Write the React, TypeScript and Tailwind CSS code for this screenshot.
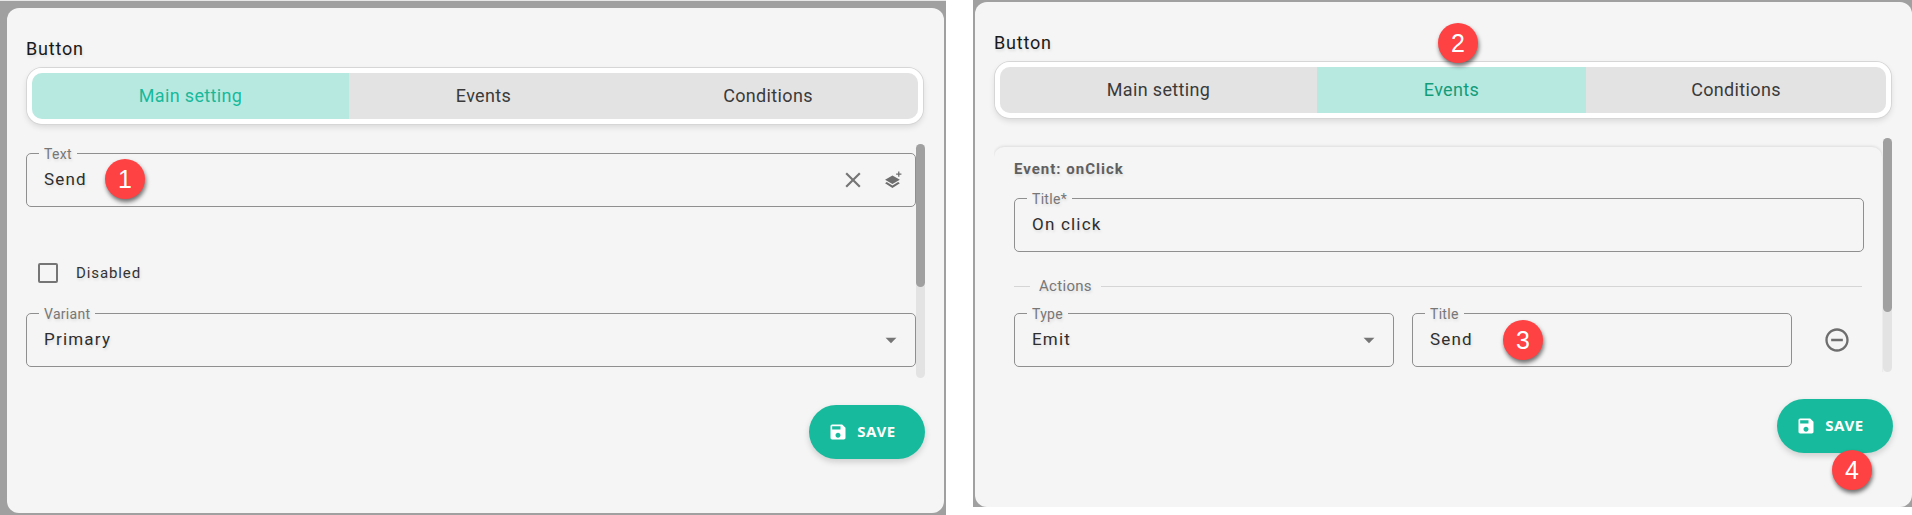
import React from "react";

const shadowText = "[text-shadow:1px_2px_3px_rgba(0,0,0,0.1)]";

function Badge({ n, className }: { n: number; className: string }) {
  return (
    <div
      className={`absolute z-10 flex h-10 w-10 items-center justify-center rounded-full bg-[#fe4143] font-['Liberation_Sans',sans-serif] text-[25px] leading-none text-white shadow-[1px_3px_4px_rgba(0,0,0,0.55)] ${className}`}
    >
      {n}
    </div>
  );
}

function Tabs({ active }: { active: number }) {
  const items = [
    { label: "Main setting", w: "w-[317px]", rounded: "rounded-l-[10px]" },
    { label: "Events", w: "w-[269px]", rounded: "" },
    { label: "Conditions", w: "flex-1", rounded: "rounded-r-[10px]" },
  ];
  return (
    <div className="flex h-[56px] w-[896px] rounded-[15px] border-[5px] border-white shadow-[0_0_0_1px_#d6d6d6,0_3px_6px_rgba(0,0,0,0.12)]">
      {items.map((t, i) => (
        <div
          key={t.label}
          className={`flex h-full items-center justify-center pb-[2px] text-[18px] font-normal tracking-[0.35px] ${t.w} ${t.rounded} ${
            i === active
              ? `bg-[#b7e9e1] ${active === 0 ? "text-[#18b99b]" : "text-[#149c78]"}`
              : "bg-[#e3e3e3] text-[#3a3a3a]"
          }`}
        >
          {t.label}
        </div>
      ))}
    </div>
  );
}

function Field({
  label,
  value,
  className,
  children,
}: {
  label: string;
  value: string;
  className: string;
  children?: React.ReactNode;
}) {
  return (
    <div className={`relative flex h-[54px] items-center rounded-[5px] border border-[#8f8f8f] pl-[17px] pr-[10px] ${className}`}>
      <span className={`absolute left-[12px] top-[-8px] bg-[#f5f5f5] px-[5px] text-[14px] leading-[16px] tracking-[0.3px] text-[#777777] ${shadowText}`}>
        {label}
      </span>
      <span className={`flex-1 text-[17px] tracking-[1.2px] text-[#2e2e2e] ${shadowText}`}>{value}</span>
      {children}
    </div>
  );
}

function Arrow() {
  return (
    <svg viewBox="0 0 24 24" className="mr-[1px] h-[26px] w-[26px] fill-[#757575]">
      <path d="M7 10l5 5 5-5z" />
    </svg>
  );
}

function SaveButton() {
  return (
    <div className="flex h-[54px] w-[116px] items-center justify-center gap-[9px] rounded-full bg-[#17ba9c] pb-[1px] pr-[10px] font-['Noto_Sans',sans-serif] text-[15px] font-bold tracking-[0.6px] text-white shadow-[0_3px_6px_rgba(0,0,0,0.16)]">
      <svg viewBox="0 0 24 24" className="h-[20px] w-[20px] fill-white">
        <path d="M17 3H5c-1.11 0-2 .9-2 2v14c0 1.1.89 2 2 2h14c1.1 0 2-.9 2-2V7l-4-4zm-5 16c-1.66 0-3-1.34-3-3s1.34-3 3-3 3 1.34 3 3-1.34 3-3 3zm3-10H5V5h10v4z" />
      </svg>
      SAVE
    </div>
  );
}

function Scrollbar({ thumb }: { thumb: string }) {
  return (
    <div className="h-full w-[9px] shrink-0 rounded-full bg-[#e3e3e3]">
      <div className={`w-full rounded-full bg-[#a0a0a0] ${thumb}`} />
    </div>
  );
}

function LeftPanel() {
  return (
    <div className="relative h-[515px] w-[946px] shrink-0 border-t border-t-[#e8e8e8] bg-[#a0a0a0] pl-[7px] pr-[2px] pt-[7px]">
      <div className="h-[505px] rounded-[12px] bg-[#f5f5f5] pl-[19px] pr-[19px]">
        <div className={`h-[53px] pt-[30px] text-[18px] font-normal leading-[22px] tracking-[0.8px] text-[#1a1a1a] ${shadowText}`}>Button</div>
        <div className="ml-[1px] mt-[7px]">
          <Tabs active={0} />
        </div>
        <div className="mt-[20px] flex h-[234px] overflow-hidden">
          <div className="w-[890px] pt-[9px]">
            <Field label="Text" value="Send" className="w-[890px]">
              <svg viewBox="0 0 24 24" className="mr-[18px] h-[26px] w-[26px] fill-[#757575]">
                <path d="M19 6.41 17.59 5 12 10.59 6.41 5 5 6.41 10.59 12 5 17.59 6.41 19 12 13.41 17.59 19 19 17.59 13.41 12z" />
              </svg>
              <svg viewBox="0 0 18 18" className="mr-[2px] h-[19px] w-[19px] fill-[#6e6e6e]">
                <path d="M8 4.2 1 8.4l7 4 7-4-1.6-1L8 4.2ZM2.6 10.5 1 11.6l7 4.6 7-4.6-1.6-1.1L8 13.7l-5.4-3.2Z" />
                <path d="M13.4 0.4h1.2v1.9h1.9v1.2h-1.9v1.9h-1.2V3.5h-1.9V2.3h1.9z" />
              </svg>
            </Field>
            <div className="ml-[12px] mt-[56px] flex h-[20px] items-center">
              <div className="h-[20px] w-[20px] rounded-[2px] border-2 border-[#757575]" />
              <span className={`ml-[18px] text-[15px] tracking-[0.9px] text-[#333333] ${shadowText}`}>Disabled</span>
            </div>
            <Field label="Variant" value="Primary" className="mt-[30px] w-[890px]">
              <Arrow />
            </Field>
          </div>
          <Scrollbar thumb="h-[143px]" />
        </div>
        <div className="mt-[27px] flex justify-end">
          <SaveButton />
        </div>
      </div>
      <Badge n={1} className="left-[105px] top-[158px]" />
    </div>
  );
}

function RightPanel() {
  return (
    <div className="relative h-[507px] flex-1 bg-[#a0a0a0] pl-[2px] pt-[2px]">
      <div className="h-[505px] rounded-[12px] bg-[#f5f5f5] pl-[19px] pr-[19px]">
        <div className={`h-[49px] pt-[30px] text-[18px] font-normal leading-[22px] tracking-[0.8px] text-[#1a1a1a] ${shadowText}`}>Button</div>
        <div className="ml-[1px] mt-[11px]">
          <Tabs active={1} />
        </div>
        <div className="mt-[20px] flex h-[234px] gap-[1px] overflow-hidden">
          <div className="mt-[9px] h-[240px] w-[888px] rounded-t-[10px] px-[20px] pt-[13px] shadow-[0_-1px_3px_rgba(0,0,0,0.1)]">
            <div className={`text-[15px] font-bold leading-[18px] tracking-[1px] text-[#5f5f5f] ${shadowText}`}>Event: onClick</div>
            <Field label="Title*" value="On click" className="mt-[20px] w-[850px]" />
            <div className="mt-[24px] flex items-center">
              <div className="h-px w-[16px] bg-[#d5d5d5]" />
              <span className={`mx-[9px] text-[15px] leading-[20px] tracking-[0.3px] text-[#777777] ${shadowText}`}>Actions</span>
              <div className="h-px flex-1 bg-[#d5d5d5]" />
            </div>
            <div className="mt-[17px] flex">
              <Field label="Type" value="Emit" className="w-[380px]">
                <Arrow />
              </Field>
              <Field label="Title" value="Send" className="ml-[18px] w-[380px]" />
              <svg viewBox="0 0 24 24" className="ml-[31px] mt-[13px] h-[28px] w-[28px] fill-[#6e6e6e]">
                <path d="M7 11v2h10v-2H7zm5-9C6.48 2 2 6.48 2 12s4.48 10 10 10 10-4.48 10-10S17.52 2 12 2zm0 18c-4.41 0-8-3.59-8-8s3.59-8 8-8 8 3.59 8 8-3.59 8-8 8z" />
              </svg>
            </div>
          </div>
          <Scrollbar thumb="h-[174px]" />
        </div>
        <div className="mt-[27px] flex justify-end">
          <SaveButton />
        </div>
      </div>
      <Badge n={2} className="left-[465px] top-[23px]" />
      <Badge n={3} className="left-[530px] top-[320px]" />
      <Badge n={4} className="left-[859px] top-[450px]" />
    </div>
  );
}

export default function App() {
  return (
    <div className="flex h-[515px] w-[1912px] items-start gap-[27px] overflow-hidden bg-white font-['Roboto',sans-serif]">
      <LeftPanel />
      <RightPanel />
    </div>
  );
}
